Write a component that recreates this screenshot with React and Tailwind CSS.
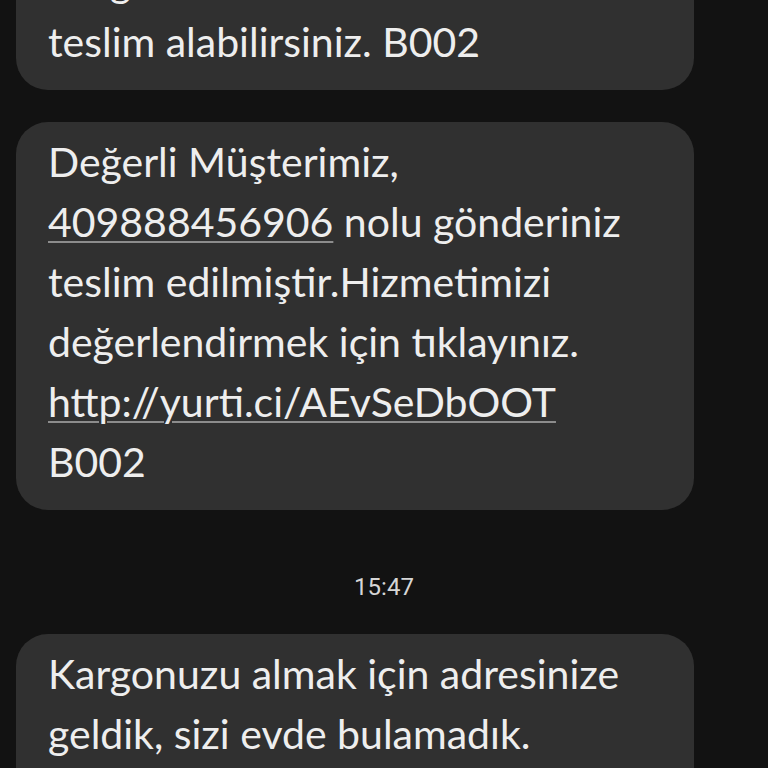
import React from "react";

const font = { fontFamily: "Lato, 'Noto Sans', sans-serif" };

function Bubble({ lines, className = "" }) {
  return (
    <div
      className={`w-[678px] rounded-[32px] bg-[#303030] px-8 pt-[10px] pb-[18px] text-[41px] leading-[60px] text-[#eeeeee] ${className}`}
      style={font}
    >
      {lines.map((l, i) => (
        <div key={i} className="whitespace-nowrap">
          {l}
        </div>
      ))}
    </div>
  );
}

const Link = ({ children }) => (
  <span className="underline decoration-[#8c8c8c] decoration-[1.5px] underline-offset-[4px]">
    {children}
  </span>
);

export default function App() {
  return (
    <div className="h-[768px] w-[768px] overflow-hidden bg-[#121212]">
      <div className="flex flex-col px-4">
        <Bubble
          className="-mt-[118px]"
          lines={[
            "geldik, sizi evde bulamadık.",
            "Kargonuzu merkezden",
            "teslim alabilirsiniz. B002",
          ]}
        />
        <Bubble
          className="mt-8"
          lines={[
            "Değerli Müşterimiz,",
            <>
              <Link>409888456906</Link> nolu gönderiniz
            </>,
            "teslim edilmiştir.Hizmetimizi",
            "değerlendirmek için tıklayınız.",
            <Link>http://yurti.ci/AEvSeDbOOT</Link>,
            "B002",
          ]}
        />
        <div
          className="mt-[63px] w-[736px] text-center text-[24px] leading-[28px] text-[#d6d6d6]"
          style={{ fontFamily: "Roboto, sans-serif" }}
        >
          15:47
        </div>
        <Bubble
          className="mt-[33px]"
          lines={[
            "Kargonuzu almak için adresinize",
            "geldik, sizi evde bulamadık.",
            "Kargonuzu merkezden teslim",
            "alabilirsiniz. B002",
          ]}
        />
      </div>
    </div>
  );
}
